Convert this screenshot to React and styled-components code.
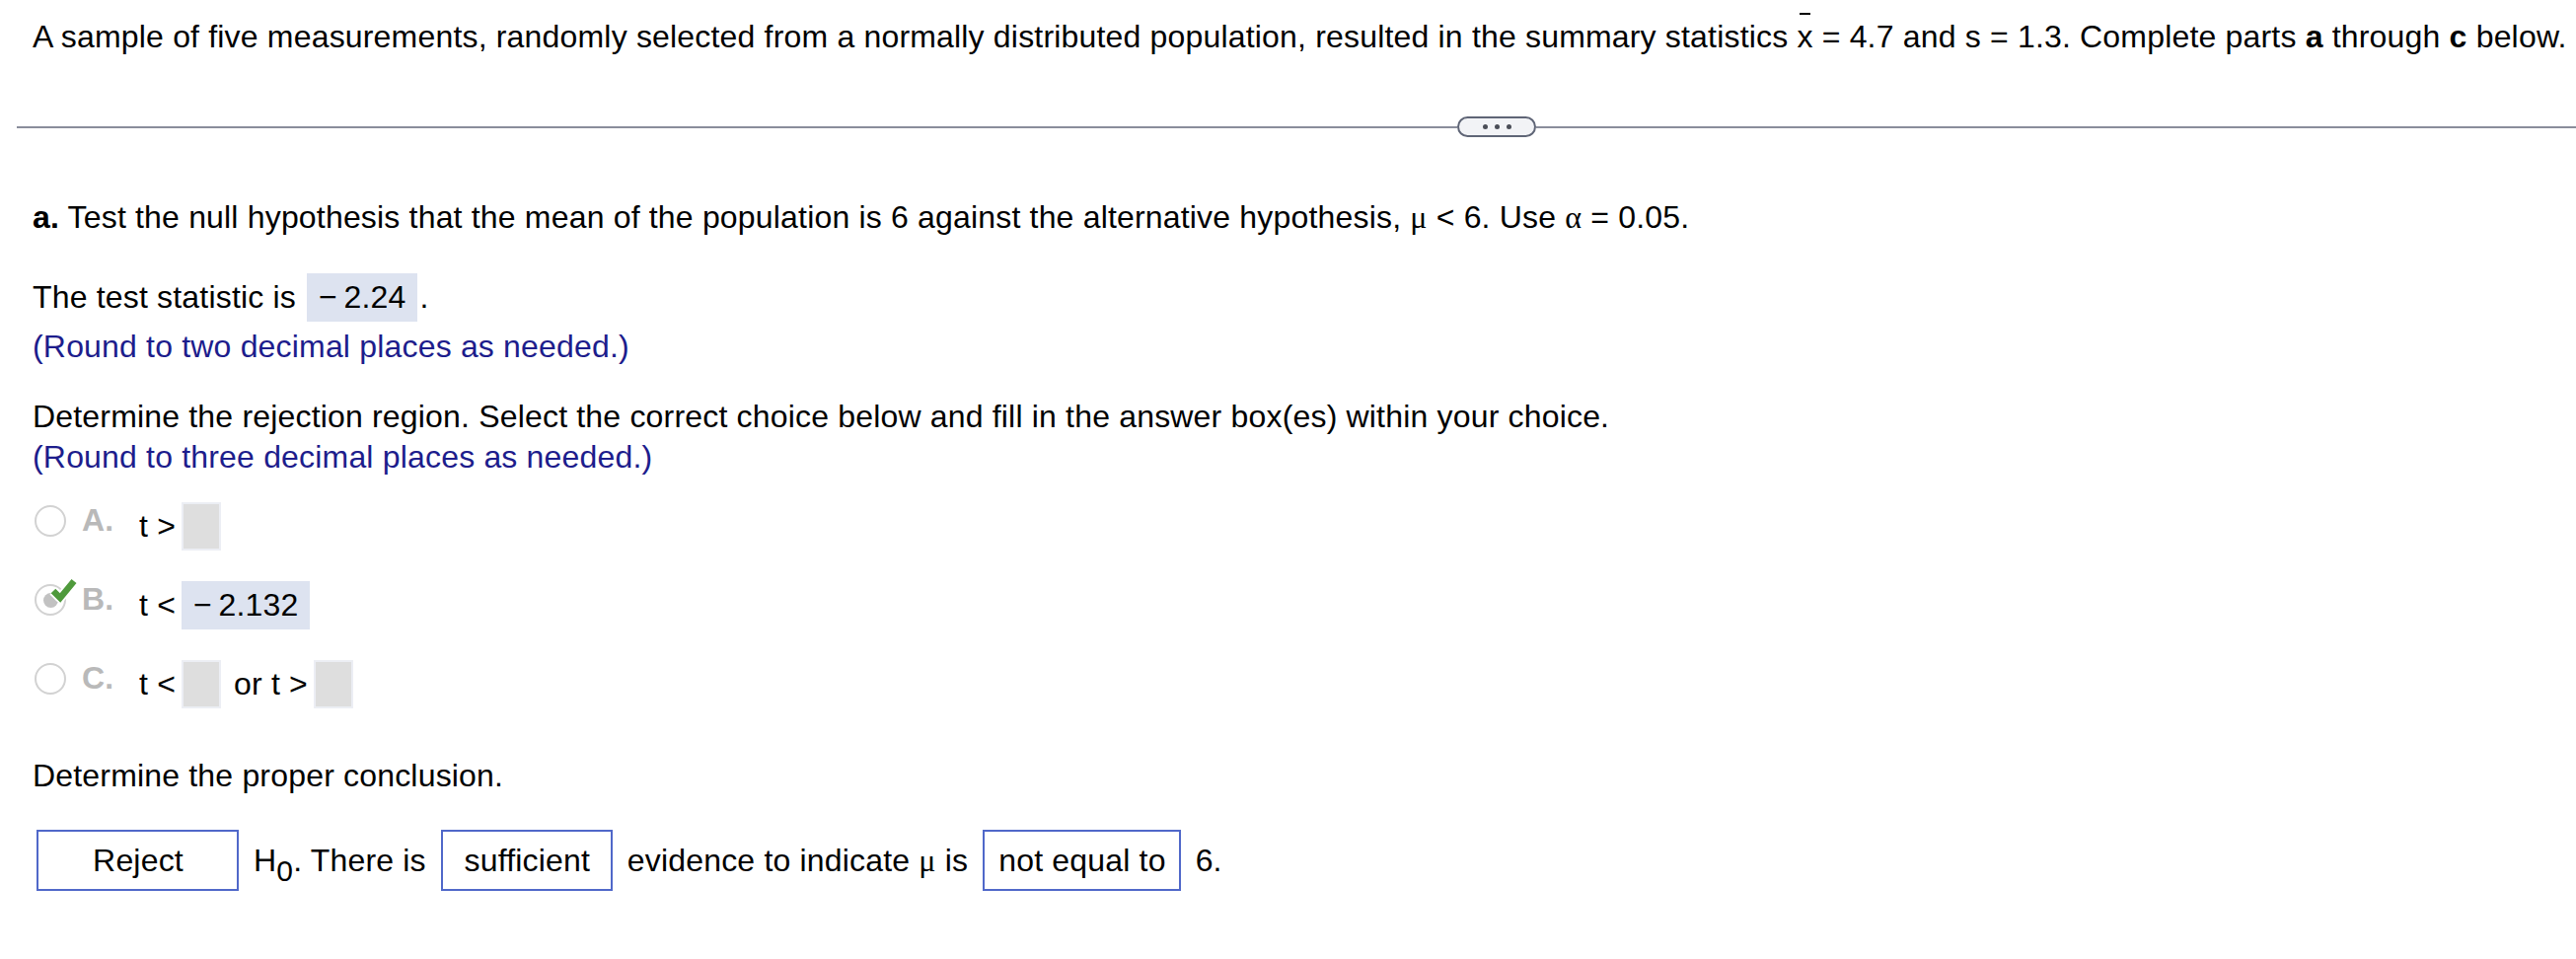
import React from "react";
import styled, { createGlobalStyle } from "styled-components";

const Global = createGlobalStyle`
  html, body { margin: 0; padding: 0; background: #fff; }
  body {
    font-family: "Liberation Sans", Arial, sans-serif;
    -webkit-font-smoothing: antialiased;
  }
`;

const Page = styled.div`
  padding: 17px 0 0 33px;
  font-size: 32px;
  line-height: 41px;
  letter-spacing: 0.18px;
  color: #000;
`;

const Para = styled.p`
  margin: ${(p) => p.$top || 0}px 0 0 0;
  white-space: nowrap;
`;

const Hint = styled(Para)`
  color: #1d1d8c;
`;

const Bar = styled.span`
  position: relative;
  display: inline-block;
  &::after {
    content: "";
    position: absolute;
    left: 3px;
    top: -4px;
    width: 11px;
    height: 2px;
    background: #000;
  }
`;

const Greek = styled.span`
  font-family: "Liberation Serif", "Times New Roman", serif;
`;

const Divider = styled.div`
  display: flex;
  align-items: center;
  margin: 60px 0 0 -16px;
  height: 21px;
`;

const Rule = styled.div`
  height: 2px;
  background: #8a8d9b;
  width: ${(p) => (p.$w ? `${p.$w}px` : "auto")};
  flex: ${(p) => (p.$w ? "none" : "1")};
`;

const Pill = styled.div`
  width: 80px;
  height: 21px;
  box-sizing: border-box;
  border: 2px solid #5f6576;
  border-radius: 11px;
  background: #f2f3f6;
  display: flex;
  align-items: center;
  justify-content: center;
  gap: 7px;
`;

const Dot = styled.span`
  width: 5px;
  height: 5px;
  border-radius: 50%;
  background: #4a4d57;
`;

const Row = styled.div`
  display: flex;
  align-items: center;
  margin-top: ${(p) => p.$top || 0}px;
  height: ${(p) => p.$h || 49}px;
  white-space: nowrap;
`;

const AnswerBox = styled.span`
  display: inline-flex;
  align-items: center;
  justify-content: center;
  box-sizing: border-box;
  height: 49px;
  min-width: 40px;
  padding: ${(p) => (p.$filled ? "0 10px" : "0")};
  margin-left: ${(p) => p.$ml || 0}px;
  margin-right: ${(p) => p.$mr || 0}px;
  background: ${(p) => (p.$filled ? "#dde3f0" : "#dedede")};
  border: 2px solid ${(p) => (p.$filled ? "#dde3f0" : "#eceef4")};
`;

const Choices = styled.div`
  margin-top: 25px;
  display: flex;
  flex-direction: column;
  gap: 31px;
`;

const Choice = styled.div`
  display: flex;
  align-items: flex-start;
  height: 49px;
  white-space: nowrap;
`;

const RadioWrap = styled.div`
  position: relative;
  width: 48px;
  height: 32px;
  margin: 3px 0 0 2px;
  flex: none;
`;

const Ring = styled.span`
  box-sizing: border-box;
  width: 32px;
  height: 32px;
  border-radius: 50%;
  border: 2px solid #d2d2d2;
  background: #fff;
  display: flex;
  align-items: center;
  justify-content: center;
`;

const Inner = styled.span`
  width: 15px;
  height: 15px;
  border-radius: 50%;
  background: #c2c2c2;
`;

const Check = styled.svg`
  position: absolute;
  left: 15px;
  top: -9px;
  width: 29px;
  height: 29px;
`;

const Letter = styled.span`
  width: 58px;
  flex: none;
  font-weight: bold;
  color: #b9b9b9;
  line-height: 32px;
  margin-top: 2px;
`;

const Expr = styled.span`
  display: flex;
  align-items: center;
  height: 49px;
`;

const Select = styled.span`
  display: inline-flex;
  align-items: center;
  justify-content: center;
  box-sizing: border-box;
  height: 62px;
  min-width: ${(p) => p.$min || 0}px;
  padding: 0 13px 0 14px;
  border: 2px solid #5068c9;
  margin: 0 15px;
  &:first-child {
    margin-left: 4px;
  }
`;

const Sub = styled.sub`
  font-size: 30px;
  line-height: 0;
  vertical-align: -10px;
`;

function Radio({ checked }) {
  return (
    <RadioWrap>
      <Ring>{checked && <Inner />}</Ring>
      {checked && (
        <Check viewBox="0 0 29 29">
          <polyline
            points="4,16 11,23 25,6"
            fill="none"
            stroke="#fff"
            strokeWidth="10"
            strokeLinejoin="round"
          />
          <polyline
            points="4,16 11,23 25,6"
            fill="none"
            stroke="#4f9a3c"
            strokeWidth="6.5"
            strokeLinejoin="miter"
          />
        </Check>
      )}
    </RadioWrap>
  );
}

export default function App() {
  return (
    <>
      <Global />
      <Page>
        <Para>
          A sample of five measurements, randomly selected from a normally
          distributed population, resulted in the summary statistics{" "}
          <Bar>x</Bar> = 4.7 and s = 1.3. Complete parts <b>a</b> through{" "}
          <b>c</b> below.
        </Para>

        <Divider>
          <Rule $w={1460} />
          <Pill>
            <Dot />
            <Dot />
            <Dot />
          </Pill>
          <Rule />
        </Divider>

        <Para $top={61}>
          <b>a.</b> Test the null hypothesis that the mean of the population is
          6 against the alternative hypothesis, <Greek>μ</Greek> &lt; 6. Use{" "}
          <Greek>α</Greek> = 0.05.
        </Para>

        <Row $top={36}>
          The test statistic is
          <AnswerBox $filled $ml={11} $mr={2}>
            −&#8201;2.24
          </AnswerBox>
          .
        </Row>
        <Hint $top={5}>(Round to two decimal places as needed.)</Hint>

        <Para $top={30}>
          Determine the rejection region. Select the correct choice below and
          fill in the answer box(es) within your choice.
        </Para>
        <Hint>(Round to three decimal places as needed.)</Hint>

        <Choices>
          <Choice>
            <Radio />
            <Letter>A.</Letter>
            <Expr>
              t &gt;
              <AnswerBox $ml={6} />
            </Expr>
          </Choice>
          <Choice>
            <Radio checked />
            <Letter>B.</Letter>
            <Expr>
              t &lt;
              <AnswerBox $filled $ml={6}>
                −&#8201;2.132
              </AnswerBox>
            </Expr>
          </Choice>
          <Choice>
            <Radio />
            <Letter>C.</Letter>
            <Expr>
              t &lt;
              <AnswerBox $ml={6} $mr={13} />
              or t &gt;
              <AnswerBox $ml={6} />
            </Expr>
          </Choice>
        </Choices>

        <Para $top={48}>Determine the proper conclusion.</Para>

        <Row $top={34} $h={62}>
          <Select $min={205}>Reject</Select>
          <span>
            H<Sub>0</Sub>. There is
          </span>
          <Select $min={174}>sufficient</Select>
          <span>
            evidence to indicate <Greek>μ</Greek> is
          </span>
          <Select>not equal to</Select>
          <span>6.</span>
        </Row>
      </Page>
    </>
  );
}
